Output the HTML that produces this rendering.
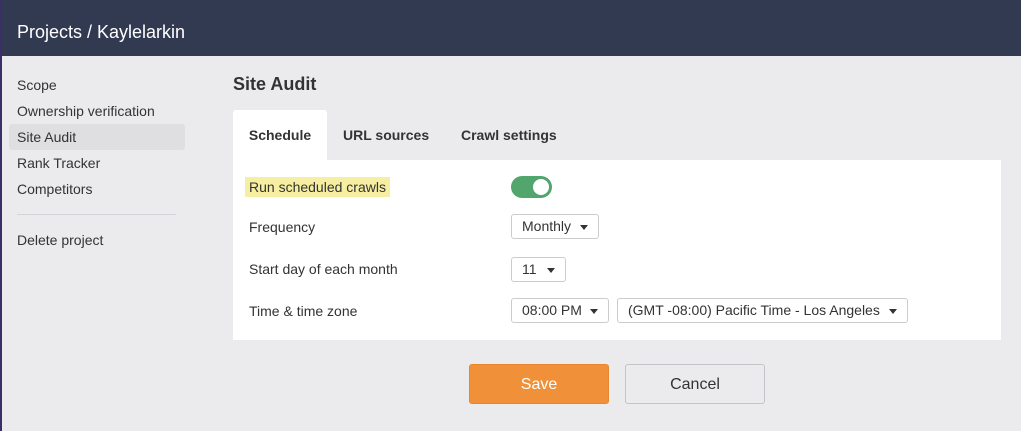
<!DOCTYPE html>
<html><head><style>
*{box-sizing:border-box;margin:0;padding:0}
body{width:1021px;height:431px;overflow:hidden;background:#ebebed;font-family:"Liberation Sans",sans-serif;color:#333;position:relative}
.hdr{position:absolute;left:0;top:0;width:1021px;height:56px;background:#323a52;color:#fff;font-size:18px;padding:22px 0 0 17px;line-height:20px}
.edge{position:absolute;left:0;top:0;width:2px;height:431px;background:#3b2f6b}
.nav{position:absolute;left:9px;top:72px;width:176px;font-size:14px}
.nav div{height:26px;line-height:26px;padding-left:8px;border-radius:3px}
.nav .act{background:#dfdfe2}
.sep{height:1px!important;background:#d4d4d8;margin:12px 9px 12px 8px}
h1{position:absolute;left:233px;top:74px;font-size:18px;font-weight:bold;color:#333}
.tab{position:absolute;top:110px;height:50px;line-height:50px;font-size:14px;font-weight:bold;color:#333}
.panel{position:absolute;left:233px;top:160px;width:768px;height:180px;background:#fff}
.lbl{position:absolute;left:249px;font-size:14px;line-height:20px}
.hl{background:#f6eea0;padding:0 4px;left:245px}
.sel{position:absolute;height:25px;border:1px solid #ccc;border-radius:3px;background:#fff;font-size:14px;line-height:23px;padding-left:10px}
.sel:after{content:"";position:absolute;right:10px;top:10px;border-left:4px solid transparent;border-right:4px solid transparent;border-top:5px solid #333}
.tog{position:absolute;left:511px;top:176px;width:41px;height:22px;border-radius:11px;background:#52a56c}
.tog:after{content:"";position:absolute;right:3px;top:3px;width:16px;height:16px;border-radius:50%;background:#fff}
.btn{position:absolute;top:364px;height:40px;line-height:40px;text-align:center;font-size:16px;border-radius:3px}
</style></head><body>
<div class="hdr">Projects / Kaylelarkin</div>
<div class="edge"></div>
<div class="nav">
<div>Scope</div><div>Ownership verification</div><div class="act">Site Audit</div><div>Rank Tracker</div><div>Competitors</div>
<div class="sep"></div><div>Delete project</div>
</div>
<h1>Site Audit</h1>
<div class="tab" style="left:233px;width:94px;background:#fff;border-radius:3px 3px 0 0;text-align:center">Schedule</div>
<div class="tab" style="left:343px">URL sources</div>
<div class="tab" style="left:461px">Crawl settings</div>
<div class="panel"></div>
<div class="lbl hl" style="top:177px">Run scheduled crawls</div>
<div class="tog"></div>
<div class="lbl" style="top:217px">Frequency</div>
<div class="sel" style="left:511px;top:214px;width:88px">Monthly</div>
<div class="lbl" style="top:259px">Start day of each month</div>
<div class="sel" style="left:511px;top:257px;width:55px">11</div>
<div class="lbl" style="top:301px">Time &amp; time zone</div>
<div class="sel" style="left:511px;top:298px;width:98px">08:00 PM</div>
<div class="sel" style="left:617px;top:298px;width:291px">(GMT -08:00) Pacific Time - Los Angeles</div>
<div class="btn" style="left:469px;width:140px;background:#f0913a;color:#fff;border:1px solid #e8862e">Save</div>
<div class="btn" style="left:625px;width:140px;background:#ebebed;border:1px solid #c4c4c8;color:#333">Cancel</div>
</body></html>
